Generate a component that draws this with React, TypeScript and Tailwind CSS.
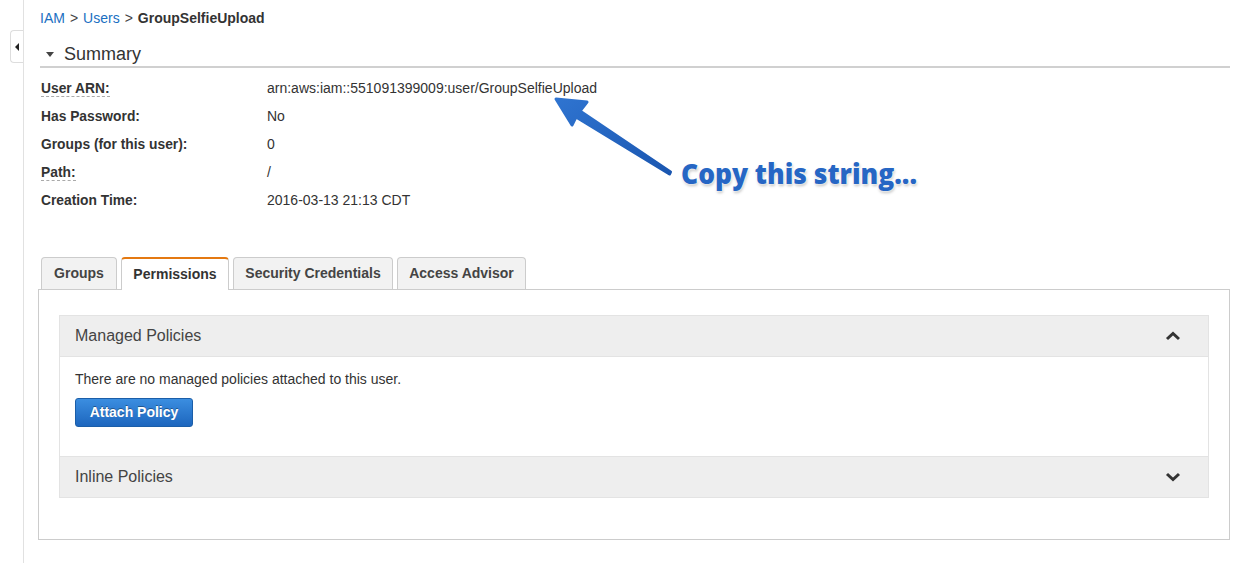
import React from 'react';

const rows: { label: string; value: string; dotted?: boolean }[] = [
  { label: 'User ARN:', value: 'arn:aws:iam::551091399009:user/GroupSelfieUpload', dotted: true },
  { label: 'Has Password:', value: 'No' },
  { label: 'Groups (for this user):', value: '0' },
  { label: 'Path:', value: '/', dotted: true },
  { label: 'Creation Time:', value: '2016-03-13 21:13 CDT' },
];

const tabs = [
  { name: 'Groups', w: 'w-[76px]' },
  { name: 'Permissions', w: 'w-[108px]', active: true },
  { name: 'Security Credentials', w: 'w-[160px]' },
  { name: 'Access Advisor', w: 'w-[129px]' },
];

function Chevron({ up }: { up?: boolean }) {
  return (
    <svg width="16" height="10" viewBox="0 0 16 10" className="shrink-0">
      <polyline
        points={up ? '2,8 8,2.5 14,8' : '2,2 8,7.5 14,2'}
        fill="none"
        stroke="#333"
        strokeWidth="3"
        strokeLinejoin="miter"
      />
    </svg>
  );
}

export default function App() {
  return (
    <div
      className="relative flex min-h-[563px] w-[1241px] bg-white text-[#333] overflow-hidden"
      style={{ fontFamily: '"Liberation Sans", Arial, sans-serif' }}
    >
      {/* collapsed nav rail */}
      <div className="flex w-[24px] shrink-0 justify-end border-r border-[#e1e1e1]">
        <div className="mt-[30px] flex h-[33px] w-[13px] items-center justify-center rounded-l-[4px] border border-r-0 border-[#ddd] bg-white">
          <div className="h-0 w-0 border-y-[4px] border-r-[4px] border-y-transparent border-r-[#222]" />
        </div>
      </div>

      <div className="flex-1 pl-[16px] pr-[11px]">
        {/* breadcrumb */}
        <div className="pt-[9px] text-[14px] leading-[18px]">
          <span className="text-[#1a6fc2]">IAM</span>
          <span className="mx-[5px] text-[#444]">&gt;</span>
          <span className="text-[#1a6fc2]">Users</span>
          <span className="mx-[5px] text-[#444]">&gt;</span>
          <span className="font-bold text-[#333]">GroupSelfieUpload</span>
        </div>

        {/* summary */}
        <div className="mt-[17px] flex h-[24px] items-center border-b-2 border-[#d0d0d0] pb-[2px]">
          <div className="ml-[6px] mr-[10px] h-0 w-0 border-x-[4px] border-t-[5px] border-x-transparent border-t-[#444]" />
          <span className="text-[18px] leading-[20px] text-[#333]">Summary</span>
        </div>

        <div className="mt-[6px] flex flex-col">
          {rows.map((r) => (
            <div key={r.label} className="flex h-[28px] items-baseline text-[14px] leading-[28px]">
              <div className="w-[227px] pl-[1px]">
                <span
                  className={
                    'text-[13.8px] font-bold text-[#333] ' +
                    (r.dotted ? 'border-b border-dashed border-[#aaa]' : '')
                  }
                >
                  {r.label}
                </span>
              </div>
              <span className="text-[#333]">{r.value}</span>
            </div>
          ))}
        </div>

        {/* tabs */}
        <div className="mt-[43px] flex items-end gap-[4px] pl-[1px]">
          {tabs.map((t) => (
            <div
              key={t.name}
              className={
                t.active
                  ? `${t.w} relative z-10 -mb-px flex h-[33px] items-center justify-center rounded-t-[4px] border border-b-0 border-[#ccc] border-t-2 border-t-[#e47911] bg-white text-[14px] font-bold text-[#333]`
                  : `${t.w} flex h-[32px] items-center justify-center rounded-t-[4px] border border-b-0 border-[#ccc] bg-[#f2f2f2] text-[14px] font-bold text-[#444]`
              }
            >
              {t.name}
            </div>
          ))}
        </div>
        <div className="-ml-[2px] h-[251px] border border-[#ccc] bg-white px-[20px] pt-[25px]">
          <div className="border border-[#e3e3e3]">
            <div className="flex h-[40px] items-center justify-between bg-[#eeeeee] pl-[15px] pr-[27px]">
              <span className="text-[16px] text-[#444]">Managed Policies</span>
              <Chevron up />
            </div>
            <div className="h-[101px] border-y border-[#e3e3e3] bg-white pl-[15px] pt-[14px]">
              <div className="text-[14px] leading-[17px] text-[#333]">
                There are no managed policies attached to this user.
              </div>
              <button className="mt-[10px] h-[29px] w-[118px] rounded-[3px] border border-[#1b5ea8] bg-gradient-to-b from-[#3b8ee0] to-[#1d66be] text-[14px] font-bold text-white [text-shadow:0_-1px_0_rgba(0,0,0,0.35)]">
                Attach Policy
              </button>
            </div>
            <div className="flex h-[40px] items-center justify-between bg-[#eeeeee] pl-[15px] pr-[27px]">
              <span className="text-[16px] text-[#444]">Inline Policies</span>
              <Chevron />
            </div>
          </div>
        </div>
      </div>

      {/* annotation arrow */}
      <svg
        className="pointer-events-none absolute left-0 top-0"
        width="1241"
        height="563"
        viewBox="0 0 1241 563"
      >
        <defs>
          <linearGradient id="arr" x1="0" y1="0" x2="1" y2="1">
            <stop offset="0" stopColor="#2f74d0" />
            <stop offset="1" stopColor="#1a56b0" />
          </linearGradient>
        </defs>
        <polygon
          points="556,99 587,102 580,111 670.5,172 669.5,174 576,117 572,125"
          fill="url(#arr)"
          stroke="url(#arr)"
          strokeWidth="3"
          strokeLinejoin="round"
        />
      </svg>
      <div
        className="pointer-events-none absolute left-[681px] top-[155px] origin-left scale-x-[0.91] whitespace-nowrap text-[29px] font-extrabold leading-[36px] text-[#2666c4] [text-shadow:0_0_2px_#fff,0_0_3px_#fff,1px_2px_3px_rgba(0,0,0,0.25)]"
        style={{ fontFamily: '"Open Sans", sans-serif' }}
      >
        Copy this string...
      </div>
    </div>
  );
}
